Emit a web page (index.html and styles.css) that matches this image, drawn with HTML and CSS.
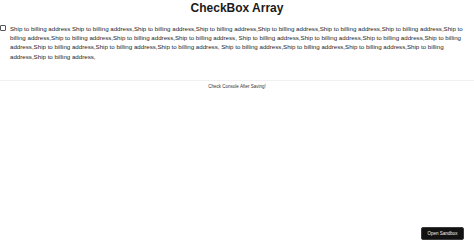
FILE: index.html
```html
<!DOCTYPE html>
<html lang="en">
<head>
<meta charset="utf-8">
<title>CheckBox Array</title>
<link rel="stylesheet" href="styles.css">
</head>
<body>
<div class="app">
  <h1 class="title">CheckBox Array</h1>
  <div class="row">
    <input type="checkbox" class="check" id="ship">
    <label class="label" for="ship">Ship to billing address Ship to billing address,Ship to billing address,Ship to billing address,Ship to billing address,Ship to billing address,Ship to billing address,Ship to billing address,Ship to billing address,Ship to billing address,Ship to billing address, Ship to billing address,Ship to billing address,Ship to billing address,Ship to billing address,Ship to billing address,Ship to billing address,Ship to billing address, Ship to billing address,Ship to billing address,Ship to billing address,Ship to billing address,Ship to billing address,</label>
  </div>
  <hr class="rule">
  <p class="note">Check Console After Saving!</p>
</div>
<a class="sandbox-btn" href="#">Open Sandbox</a>
</body>
</html>
```

FILE: styles.css
```css
html, body {
  margin: 0;
  padding: 0;
  background: #ffffff;
}
body {
  font-family: "Liberation Sans", Arial, Helvetica, sans-serif;
  color: #222222;
}
.app {
  display: flex;
  flex-direction: column;
}
.title {
  margin: 0;
  font-size: 12px;
  line-height: 16px;
  font-weight: 700;
  text-align: center;
  color: #1b1b1b;
}
.row {
  display: flex;
  align-items: flex-start;
  gap: 4px;
  margin-top: 7.5px;
  padding-right: 7px;
}
.check {
  appearance: none;
  -webkit-appearance: none;
  width: 6px;
  height: 6px;
  margin: 1px 0 0 0;
  border: 1px solid #555555;
  border-radius: 1px;
  background: #ffffff;
  box-sizing: border-box;
  flex: none;
}
.label {
  flex: 1;
  font-size: 6.17px;
  line-height: 9.4px;
  color: #262626;
}
.rule {
  margin: 19px 0 0 0;
  border: 0;
  height: 1px;
  background: #f0f0f0;
}
.note {
  margin: 3px 0 0 0;
  font-size: 4.5px;
  line-height: 6px;
  text-align: center;
  color: #333333;
}
.sandbox-btn {
  position: fixed;
  right: 10px;
  bottom: 8px;
  width: 43px;
  height: 13px;
  box-sizing: border-box;
  display: flex;
  align-items: center;
  justify-content: center;
  background: #121212;
  border: 1px solid #3a3a3a;
  border-radius: 2px;
  color: #f2f2f2;
  font-size: 4.5px;
  text-decoration: none;
}
```
